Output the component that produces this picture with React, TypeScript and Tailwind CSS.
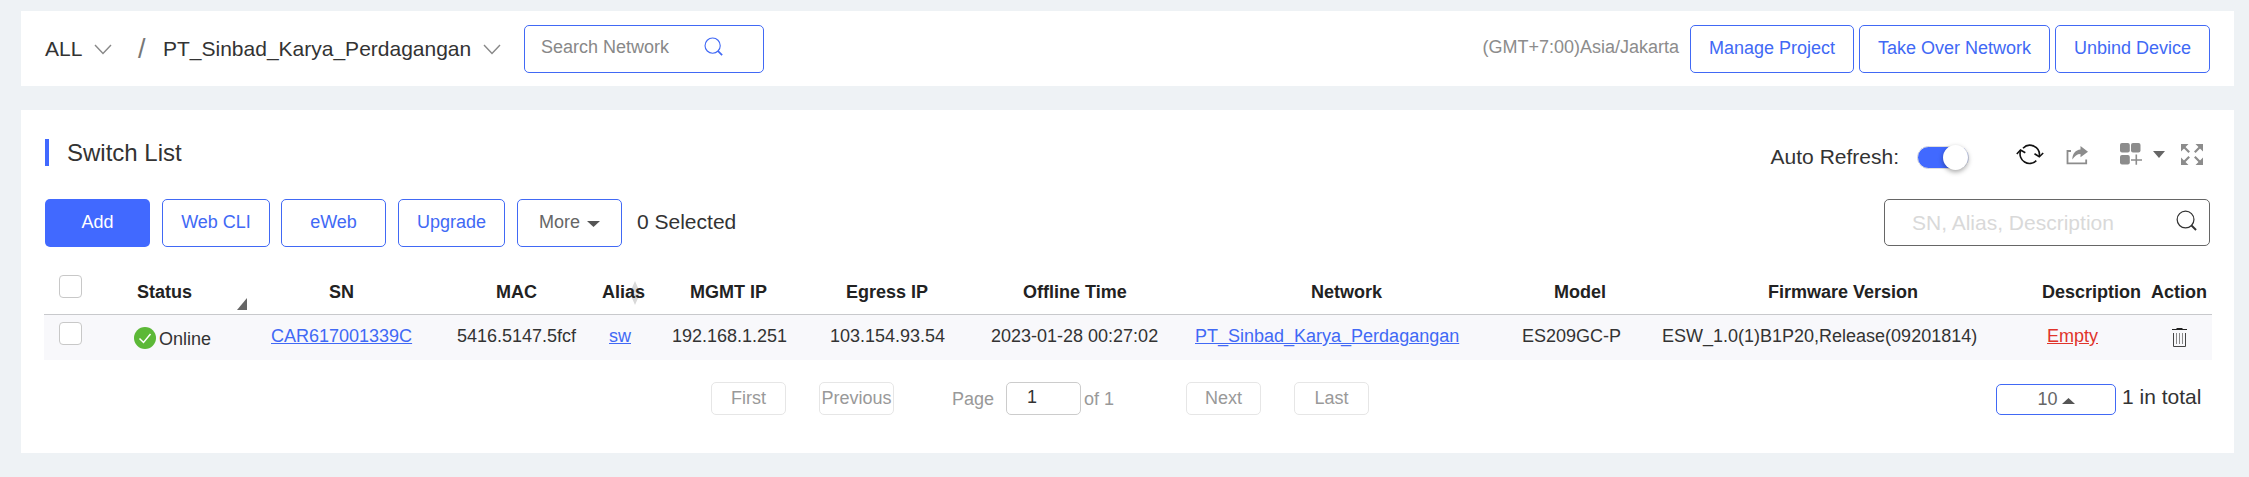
import React from "react";

const headerCells: [string, string][] = [
  ["Status", "w-[192px]"],
  ["SN", "w-[167px]"],
  ["MAC", "w-[106px]"],
  ["Alias", "w-[88px]"],
  ["MGMT IP", "w-[156px]"],
  ["Egress IP", "w-[177px]"],
  ["Offline Time", "w-[288px]"],
  ["Network", "w-[243px]"],
  ["Model", "w-[214px]"],
  ["Firmware Version", "w-[274px]"],
  ["Description", "w-[109px]"],
  ["Action", "w-[58px]"],
];

const rowCells: [string, string, string][] = [
  ["CAR617001339C", "w-[186px]", "text-[#4169f5] underline"],
  ["5416.5147.5fcf", "w-[152px]", ""],
  ["sw", "w-[63px]", "text-[#4169f5] underline"],
  ["192.168.1.251", "w-[158px]", ""],
  ["103.154.93.54", "w-[161px]", ""],
  ["2023-01-28 00:27:02", "w-[204px]", ""],
  ["PT_Sinbad_Karya_Perdagangan", "w-[327px]", "text-[#4169f5] underline"],
  ["ES209GC-P", "w-[140px]", ""],
  ["ESW_1.0(1)B1P20,Release(09201814)", "w-[385px]", ""],
  ["Empty", "w-[125px]", "text-[#e0342b] underline"],
];

function Chevron() {
  return (
    <svg width="18" height="11" viewBox="0 0 18 11" fill="none" stroke="#888" strokeWidth="1.4">
      <path d="M1 1l8 8.5L17 1" />
    </svg>
  );
}

function Magnifier({ color, size }: { color: string; size: number }) {
  return (
    <svg width={size} height={size} viewBox="0 0 22 22" fill="none" stroke={color}>
      <circle cx="10" cy="10" r="8.8" strokeWidth="1.3" />
      <path d="M16 16l5 5" strokeWidth="2" />
    </svg>
  );
}

function OutlineButton({ label, width }: { label: string; width: string }) {
  return (
    <button className={`flex h-12 items-center justify-center rounded-[5px] border border-[#4169f5] pb-0.5 text-[18px] text-[#4169f5] ${width}`}>
      {label}
    </button>
  );
}

function PagerButton({ label, className }: { label: string; className: string }) {
  return (
    <button className={`flex h-[33px] w-[75px] items-center justify-center rounded-[5px] border border-[#e6e6e6] text-[18px] text-[#999] ${className}`}>
      {label}
    </button>
  );
}

function Checkbox({ className }: { className: string }) {
  return <span className={`h-[23px] w-[23px] shrink-0 rounded-[4px] border border-[#c8c8c8] bg-white ${className}`} />;
}

export default function App() {
  return (
    <div className="flex h-[477px] w-[2249px] flex-col gap-6 overflow-hidden bg-[#eef2f5] pt-[11px] pr-[15px] pl-[21px] font-['Liberation_Sans',Arial,sans-serif] whitespace-nowrap text-[#333]">
      <header className="flex h-[75px] shrink-0 items-start bg-white pt-3.5 pr-6 pl-6">
        <div className="flex h-12 items-center">
          <span className="w-[49px] text-[21px] leading-6">ALL</span>
          <Chevron />
          <span className="ml-[26px] w-[25px] text-[27px] leading-none text-[#777]">/</span>
          <span className="w-[320px] text-[21px] leading-6">PT_Sinbad_Karya_Perdagangan</span>
          <Chevron />
        </div>
        <div className="ml-[23px] flex h-12 w-[240px] items-start rounded-[5px] border border-[#4169f5] pt-[9px] pl-4">
          <span className="w-[163px] text-[18px] leading-6 text-[#888]">Search Network</span>
          <span className="pt-[2px]">
            <Magnifier color="#4169f5" size={19} />
          </span>
        </div>
        <div className="ml-auto flex items-center">
          <span className="mr-[11px] pb-[3px] text-[18px] text-[#8c8c8c]">(GMT+7:00)Asia/Jakarta</span>
          <div className="flex gap-[5px]">
            <OutlineButton label="Manage Project" width="w-[164px]" />
            <OutlineButton label="Take Over Network" width="w-[191px]" />
            <OutlineButton label="Unbind Device" width="w-[155px]" />
          </div>
        </div>
      </header>

      <main className="flex h-[343px] shrink-0 flex-col bg-white pl-[23px]">
        <div className="flex h-[89px] items-start pt-[29px] pl-px">
          <div className="flex h-[27px] items-center border-l-4 border-[#4169ff] pl-[18px] text-2xl leading-none">
            <h1 className="pt-px">Switch List</h1>
          </div>
          <div className="ml-auto flex items-center pr-[31px]">
            <span className="mt-[6px] text-[21px] leading-6">Auto Refresh:</span>
            <span className="mt-[7px] ml-[18px] flex h-[23px] w-[52px] items-center justify-end rounded-full border border-[#dfdfdf] bg-[#4169ff]">
              <span className="h-[25px] w-[25px] shrink-0 rounded-full bg-white shadow-[0_2px_5px_rgba(0,0,0,0.35)]" />
            </span>
            <svg className="ml-[47px]" width="28" height="22" viewBox="0 0 28 22" fill="none" stroke="#111" strokeWidth="1.6">
              <path d="M7 5.200A9.500 9.500 0 0 1 23.300 13M20.300 17.600A9.500 9.500 0 0 1 4.500 8" />
              <path d="M18.500 10.800l4.800 3 3.900-3.800M.8 11l3.700-4L9.300 9.800" />
            </svg>
            <svg className="mt-px ml-[22px]" width="23" height="20" viewBox="0 0 23 20" fill="none">
              <path d="M5 6H1.500v12.300h18.700V14.500" stroke="#8c8c8c" strokeWidth="1.800" />
              <path d="M14.500 1l7.500 5.700-7.500 5.500V9C11 9 8.800 11 6.300 14.500 6.500 8.500 9.500 5 14.500 4.500z" fill="#8c8c8c" />
            </svg>
            <svg className="ml-[31px]" width="22" height="22" viewBox="0 0 22 22" fill="#8c8c8c">
              <rect width="9.800" height="9.500" rx="2" />
              <rect x="11" width="9.500" height="9.500" rx="2" />
              <rect y="12" width="9.800" height="9.500" rx="2" />
              <path d="M15.500 11.500h1.600v4.700H22v1.600h-4.900v4h-1.600v-4H11v-1.600h4.500z" />
            </svg>
            <svg className="ml-[11px]" width="12" height="7" viewBox="0 0 12 7" fill="#666">
              <path d="M0 0h12L6 7z" />
            </svg>
            <svg className="ml-4" width="22" height="21" viewBox="0 0 22 21" fill="#8c8c8c">
              <path d="M0 0h7.500L0 7.500zM22 0h-7.500L22 7.500zM0 21h7.500L0 13.500zM22 21h-7.500l7.500-7.500z" />
              <path d="M2.500 2.500l5.700 5.700M19.500 2.500l-5.700 5.700M2.500 18.500l5.700-5.700M19.500 18.500l-5.700-5.700" stroke="#8c8c8c" strokeWidth="2.200" />
            </svg>
          </div>
        </div>

        <div className="flex h-[76px] items-start pr-6 pl-px">
          <div className="flex items-center">
            <button className="mr-3 flex h-12 w-[105px] items-center justify-center rounded-[5px] bg-[#4169ff] pb-0.5 text-[18px] text-white">Add</button>
            <div className="mr-3 flex gap-[11px]">
              <OutlineButton label="Web CLI" width="w-[108px]" />
              <OutlineButton label="eWeb" width="w-[105px]" />
            </div>
            <div className="flex gap-3">
              <OutlineButton label="Upgrade" width="w-[107px]" />
              <button className="flex h-12 w-[105px] items-center justify-center gap-[7px] rounded-[5px] border border-[#4169f5] pb-0.5 text-[18px] text-[#666]">
                More
                <svg className="mt-[3px]" width="13" height="6" viewBox="0 0 13 6" fill="#555">
                  <path d="M0 0h13L6.500 6z" />
                </svg>
              </button>
            </div>
            <span className="ml-[15px] pb-[3px] text-[21px] leading-6">0 Selected</span>
          </div>
          <div className="ml-auto flex h-[47px] w-[326px] items-center justify-between rounded-[5px] border border-[#666] pr-3 pl-[27px]">
            <span className="text-[21px] leading-6 text-[#d9d9d9]">SN, Alias, Description</span>
            <span className="pb-1">
              <Magnifier color="#333" size={21} />
            </span>
          </div>
        </div>

        <div className="flex h-[40px] w-[2168px] border-b border-[#c8c9cc] pl-[15px] text-[18px] font-bold text-[#222]">
          <Checkbox className="mr-[55px]" />
          {headerCells.map(([label, width]) => (
            <div key={label} className={`relative shrink-0 pt-[5px] leading-6 ${width}`}>
              {label === "Alias" && (
                <svg className="absolute top-[6px] left-[28px]" width="10" height="24" viewBox="0 0 10 24" fill="#d9d9d9">
                  <path d="M5 0l5 11.500H0zM5 24l5-11.500H0z" />
                </svg>
              )}
              <span className="relative">{label}</span>
              {label === "Status" && (
                <svg className="absolute top-[23px] left-[100px]" width="10" height="12" viewBox="0 0 10 12" fill="#666">
                  <path d="M10 0v12H0z" />
                </svg>
              )}
            </div>
          ))}
        </div>

        <div className="flex h-[45px] w-[2168px] shrink-0 bg-[#f8f8fb] pl-[15px] text-[18px]">
          <Checkbox className="mt-[7px] mr-[52px]" />
          <div className="flex w-[137px] items-start gap-[3px] pt-3">
            <svg width="22" height="22" viewBox="0 0 22 22" fill="none">
              <circle cx="11" cy="11" r="11" fill="#5cb837" />
              <path d="M5.500 11.500l4 4 7-8.500" stroke="#fff" strokeWidth="1.500" />
            </svg>
            <span className="leading-6">Online</span>
          </div>
          {rowCells.map(([label, width, tone]) => (
            <div key={label} className={`shrink-0 pt-[9px] leading-6 ${width}`}>
              <span className={tone}>{label}</span>
            </div>
          ))}
          <svg className="mt-[13px]" width="15" height="20" viewBox="0 0 15 20" fill="none" stroke="#444" strokeWidth="1">
            <path d="M0 1.500h15M4.500.5h6" stroke="#222" />
            <path d="M1.500 5v13.500h12V5" />
            <path d="M4.500 5v11M7.500 5v11M10.500 5v11" stroke="#888" />
          </svg>
        </div>

        <div className="flex pt-[22px]">
          <PagerButton label="First" className="ml-[667px]" />
          <PagerButton label="Previous" className="ml-[33px]" />
          <span className="mt-[5px] ml-[58px] w-[54px] text-[18px] leading-6 text-[#999]">Page</span>
          <span className="flex h-[33px] w-[75px] items-center rounded-[5px] border border-[#ccc] pb-0.5 pl-5 text-[18px]">1</span>
          <span className="mt-[5px] ml-[3px] w-[102px] text-[18px] leading-6 text-[#999]">of 1</span>
          <PagerButton label="Next" className="" />
          <PagerButton label="Last" className="ml-[33px]" />
          <button className="mt-[2px] ml-[627px] flex h-[31px] w-[120px] items-center justify-center gap-1 rounded-[5px] border border-[#4169f5] text-[18px] text-[#666]">
            10
            <svg className="mt-0.5" width="13" height="6" viewBox="0 0 13 6" fill="#555">
              <path d="M0 6h13L6.500 0z" />
            </svg>
          </button>
          <span className="mt-[3px] ml-1.5 text-[21px] leading-6">1 in total</span>
        </div>
      </main>
    </div>
  );
}
